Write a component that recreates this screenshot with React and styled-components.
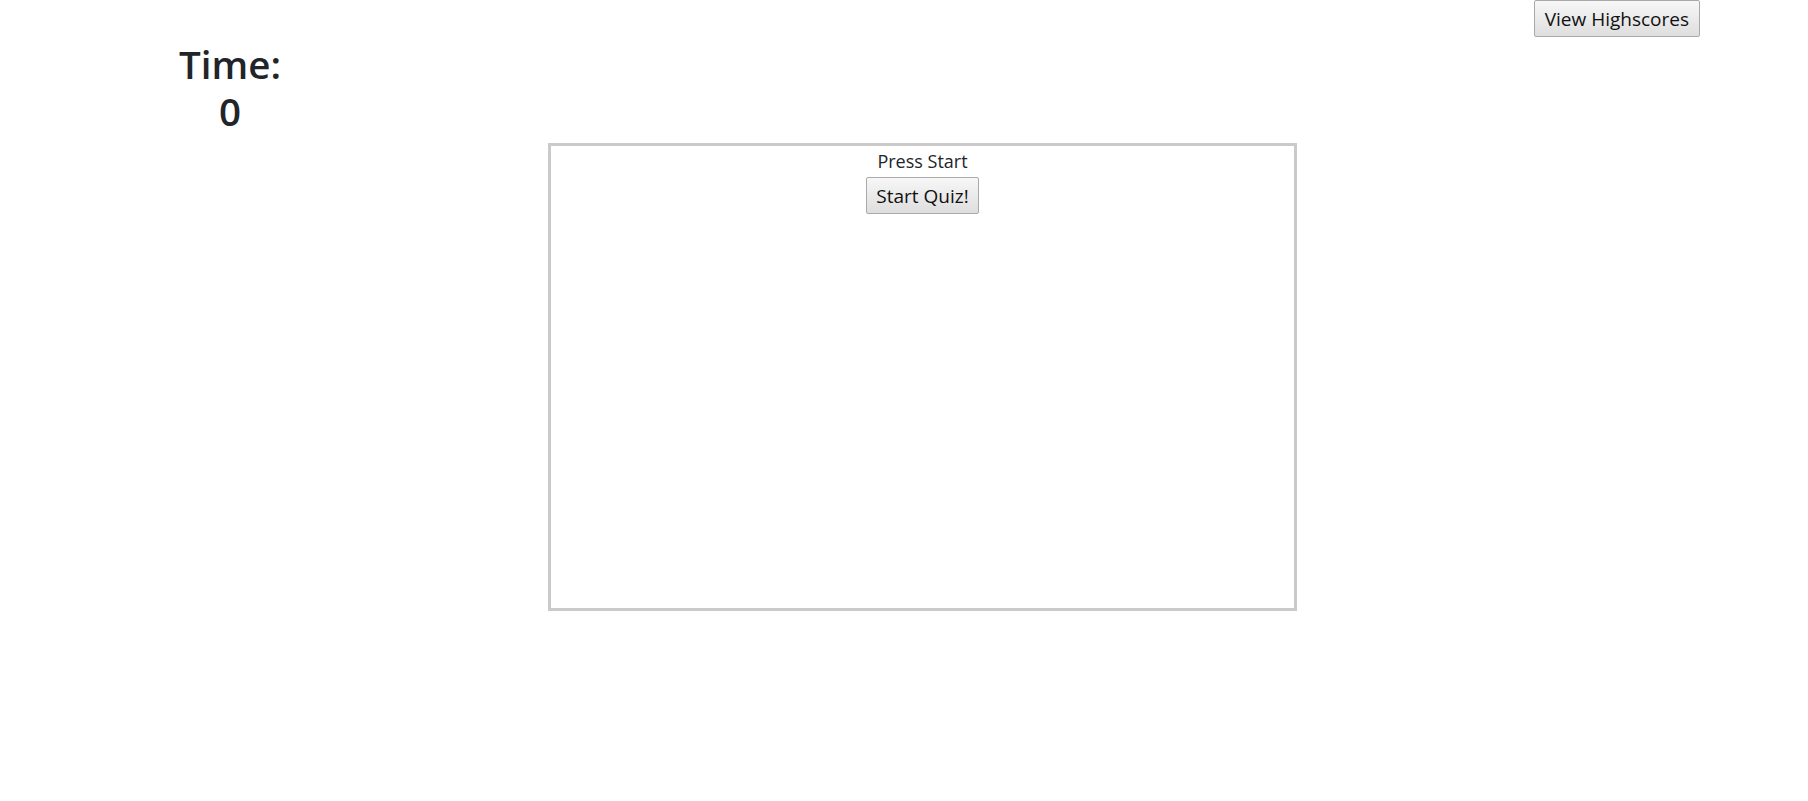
import React from "react";
import styled, { createGlobalStyle } from "styled-components";

const GlobalStyle = createGlobalStyle`
    body {
        margin: 0;
        background: #fff;
        color: #212529;
        font-family: "Open Sans", "Noto Sans", sans-serif;
    }
`;

const Page = styled.div`
    display: flex;
    flex-direction: column;
    min-height: 801px;
`;

const TopBar = styled.header`
    display: flex;
    justify-content: flex-end;
    padding-right: 108px;
`;

const Button = styled.button`
    font-family: inherit;
    font-size: ${props => props.size || 19}px;
    color: #111;
    height: 37px;
    padding: 0 ${props => props.pad || 9}px;
    background: linear-gradient(#f7f7f7, #dedede);
    border: 1px solid #a9a9a9;
    border-radius: 2px;
    cursor: pointer;
    &:hover {
        background: linear-gradient(#eef6fc, #d6e8f6);
        border-color: #3c7fb1;
    }
`;

const Timer = styled.h1`
    margin: 4px 0 9px 160px;
    width: 140px;
    text-align: center;
    font-size: 38.5px;
    line-height: 46.5px;
    font-weight: 600;
`;

const QuizBox = styled.main`
    margin-left: 548px;
    width: 749px;
    height: 468px;
    box-sizing: border-box;
    border: 3px solid #cacaca;
    display: flex;
    flex-direction: column;
    align-items: center;
`;

const Prompt = styled.p`
    margin: 3px 0 4px;
    font-size: 18px;
`;

export default function App() {
    return (
        <Page>
            <GlobalStyle />
            <TopBar>
                <Button size={19} pad={10}>View Highscores</Button>
            </TopBar>
            <Timer>
                Time:
                <br />
                0
            </Timer>
            <QuizBox>
                <Prompt>Press Start</Prompt>
                <Button size={19} pad={9}>Start Quiz!</Button>
            </QuizBox>
        </Page>
    );
}
